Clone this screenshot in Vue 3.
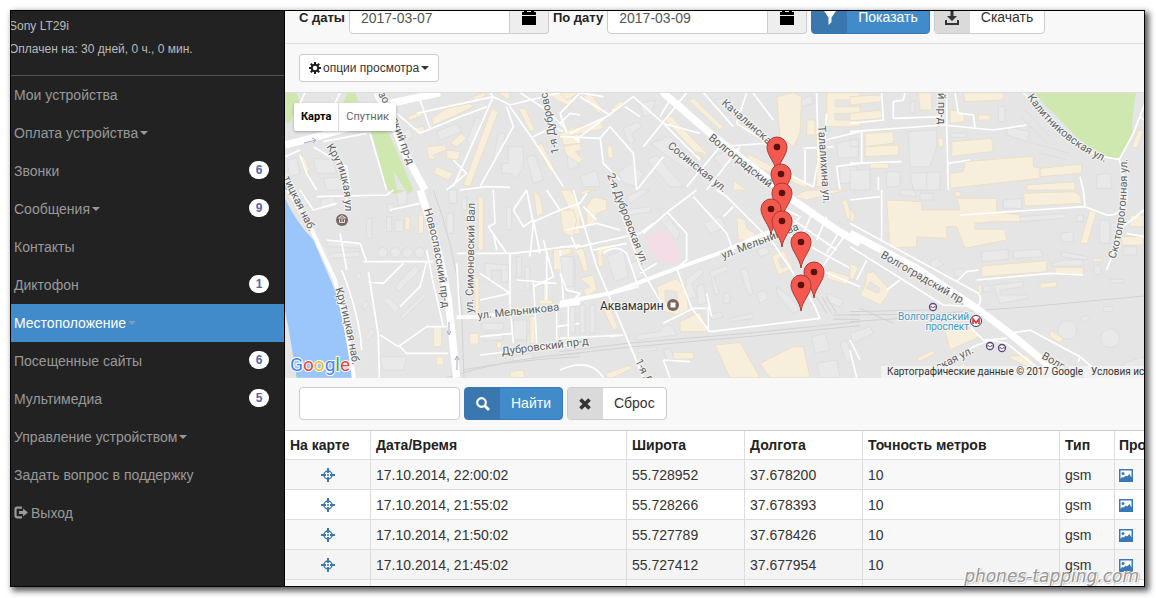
<template>
  <div class="window">
    <aside class="sidebar">
      <div class="device">
        <p>Sony LT29i</p>
        <p>Оплачен на: 30 дней, 0 ч., 0 мин.</p>
      </div>
      <nav>
        <a v-for="item in menu" :key="item.title" href="#" :class="{ active: item.active }">
          <svg v-if="item.exit" class="exit" viewBox="0 0 14 14">
            <path d="M8 1.7H3.2Q1.5 1.7 1.5 3.4V9.6Q1.5 11.3 3.2 11.3H8" fill="none" stroke="currentColor" stroke-width="2.2" />
            <path d="M5 5h4V2.4L14 6.5 9 10.6V8H5z" fill="currentColor" />
          </svg>
          <span>{{item.title}}</span>
          <i v-if="item.drop" class="caret"></i>
          <b v-if="item.count" class="badge">{{item.count}}</b>
        </a>
      </nav>
    </aside>

    <main>
      <form class="dates" @submit.prevent>
        <template v-for="field in dates" :key="field.id">
          <label :for="field.id">{{field.label}}</label>
          <div class="group">
            <input :id="field.id" v-model="field.value" type="text">
            <button type="button" class="addon" aria-label="Календарь">
              <svg viewBox="0 0 16 16" width="16" height="16">
                <path d="M1 2h2V0h3v2h4V0h3v2h2v3H1zM1 6h14v9H1z" />
              </svg>
            </button>
          </div>
        </template>
        <button type="button" class="labeled primary">
          <i><svg viewBox="0 0 14 14" width="14" height="14"><path d="M1 0h12L8.500 6.500V11L5.500 14V6.500z" fill="currentColor" /></svg></i>
          <span>Показать</span>
        </button>
        <button type="button" class="labeled">
          <i><svg viewBox="0 0 14 14" width="14" height="14"><path d="M5.500 0h3v5H12L7 10 2 5h3.500zM0 9h2v3h10V9h2v5H0z" fill="currentColor" /></svg></i>
          <span>Скачать</span>
        </button>
      </form>

      <div class="options">
        <button type="button">
          <svg viewBox="0 0 14 14" width="12" height="12">
            <circle cx="7" cy="7" r="3.800" fill="none" stroke="#222" stroke-width="2.400" />
            <path d="M7 0v3M7 11v3M0 7h3M11 7h3M2 2l2 2M10 10l2 2M12 2l-2 2M4 10l-2 2" stroke="#222" stroke-width="2.400" />
          </svg>
          опции просмотра
          <i class="caret"></i>
        </button>
      </div>

      <section class="map">
        <svg class="canvas" viewBox="285 93 859 285" preserveAspectRatio="xMinYMid slice">
          <defs>
            <path v-for="(d, id) in curves" :id="id" :key="id" :d="d" />
            <g id="pin">
              <path d="M0 26C-1 16-10 9-10 0A10 10 0 0 1 10 0C10 9 1 16 0 26Z" fill="#f5584f" stroke="#a83a35" />
              <circle r="3.300" fill="#5a100d" />
            </g>
          </defs>
          <rect x="285" y="93" width="1200" height="285" fill="#e5e5e5" />
          <g v-for="tile in tiles" :key="tile.at" :transform="`translate(${tile.at}) scale(.33333)`">
            <path :d="tile.green" fill="#cfe8b0" />
            <path :d="tile.water" fill="#9ac6fb" />
            <path :d="tile.pink" fill="#f4dde6" />
            <path :d="tile.grey" fill="#e9e9e9" stroke="#d8dadd" stroke-width="2" />
            <path :d="tile.beige" fill="#f8eedc" stroke="#ebdfc8" stroke-width="3" fill-rule="evenodd" />
            <path :d="tile.rail" class="rail" />
            <path :d="tile.minor" class="road minor" />
            <path :d="tile.mid" class="road mid" />
            <path :d="tile.major" class="road major" />
          </g>

          <g class="labels">
            <text v-for="(l, i) in labels" :key="i" :transform="`translate(${l[1]} ${l[2]}) rotate(${l[3]})`">{{l[0]}}</text>
            <text v-for="(text, id) in curved" :key="id"><textPath :href="'#' + id">{{text}}</textPath></text>
          </g>
          <text x="600" y="310" class="place">Аквамарин</text>
          <circle cx="673" cy="305" r="6" fill="#7b6561" />
          <rect x="671" y="303" width="4" height="4" fill="#fff" stroke="#fff" stroke-width="1" />
          <circle cx="342" cy="220" r="6" fill="#7b6561" />
          <path d="M338.500 218l3.500-2.500 3.500 2.500zM339.500 219.500v3h5v-3M342 219v3" fill="none" stroke="#fff" stroke-width=".8" />
          <g class="metro">
            <text x="969" y="320">Волгоградский</text>
            <text x="969" y="330">проспект</text>
          </g>
          <circle cx="976" cy="321" r="5.500" fill="#fff" stroke="#34386b" />
          <path d="M973 324v-5l3 4 3-4v5" fill="none" stroke="#e0342e" stroke-width="1.600" />
          <g v-for="m in exits" :key="m" :transform="`translate(${m})`">
            <circle r="3.500" fill="#fff" stroke="#4a4d85" stroke-width="1.300" />
            <path d="M-2 1v-2l2 2 2-2v2" fill="none" stroke="#b56" />
          </g>
          <path d="M449 322v12M447 331l2 4 2-4M457 370v-13M455 360l2-4 2 4M304 143l12-3M312 138l4 2-3 3" fill="none" stroke="#a5a9c2" />
          <use v-for="p in pins" :key="p" href="#pin" :transform="`translate(${p})`" />
          <text x="290" y="371" class="google">
            <tspan fill="#4285f4">G</tspan><tspan fill="#ea4335">o</tspan><tspan fill="#fbbc05">o</tspan><tspan fill="#4285f4">g</tspan><tspan fill="#34a853">l</tspan><tspan fill="#ea4335">e</tspan>
          </text>
        </svg>
        <div class="map-type">
          <button type="button" class="on">Карта</button>
          <button type="button">Спутник</button>
        </div>
        <div class="credits">
          <span>Картографические данные © 2017 Google</span>
          <a href="#">Условия использования</a>
        </div>
      </section>

      <form class="search" @submit.prevent>
        <input v-model="query" type="text" aria-label="Поиск">
        <button type="button" class="labeled primary">
          <i><svg viewBox="0 0 14 14" width="14" height="14"><circle cx="5.500" cy="5.500" r="4.300" fill="none" stroke="currentColor" stroke-width="2.200" /><path d="M8.500 8.500l4.500 4.500" stroke="currentColor" stroke-width="2.800" /></svg></i>
          <span>Найти</span>
        </button>
        <button type="button" class="labeled">
          <i><svg viewBox="0 0 14 14" width="14" height="14"><path d="M2.500 2.500l9 9M11.500 2.500l-9 9" stroke="currentColor" stroke-width="3.600" /></svg></i>
          <span>Сброс</span>
        </button>
      </form>

      <table>
        <colgroup>
          <col class="c-map"><col class="c-date"><col class="c-geo"><col class="c-geo"><col><col class="c-type"><col class="c-view">
        </colgroup>
        <thead>
          <tr>
            <th v-for="head in heads" :key="head">{{head}}</th>
          </tr>
        </thead>
        <tbody>
          <tr v-for="row in rows" :key="row[0]">
            <td class="center">
              <a href="#" aria-label="На карте">
                <svg viewBox="0 0 14 14" width="14" height="14" fill="none" stroke="#3a78b5">
                  <circle cx="7" cy="7" r="4" stroke-width="1.400" />
                  <path d="M7 0v5M7 9v5M0 7h5M9 7h5" stroke-width="2" />
                  <path d="M6 7h2" stroke-width="1.500" />
                </svg>
              </a>
            </td>
            <td>{{row[0]}}</td>
            <td>{{row[1]}}</td>
            <td>{{row[2]}}</td>
            <td>10</td>
            <td>gsm</td>
            <td>
              <a href="#" aria-label="Просмотр">
                <svg viewBox="0 0 14 13" width="14" height="13">
                  <path d="M0 0h14v13H0z" fill="#3a78b5" />
                  <path d="M1.500 1.500h11v7L10.500 5 8 7.500 7 6.500 4.500 8.500 3 8 1.500 10z" fill="#fff" />
                  <circle cx="4" cy="4.500" r="1.500" fill="#3a78b5" />
                </svg>
              </a>
            </td>
          </tr>
          <tr class="rest"><td v-for="n in 7" :key="n"></td></tr>
        </tbody>
      </table>
      <div class="watermark">phones-tapping.com</div>
    </main>
  </div>
</template>

<script setup>
  import { ref } from 'vue';

  const query = ref('');
  const dates = ref([
    { id: 'from', label: 'С даты', value: '2017-03-07' },
    { id: 'to', label: 'По дату', value: '2017-03-09' },
  ]);

  const menu = [
    { title: 'Мои устройства' },
    { title: 'Оплата устройства', drop: true },
    { title: 'Звонки', count: 6 },
    { title: 'Сообщения', drop: true, count: 9 },
    { title: 'Контакты' },
    { title: 'Диктофон', count: 1 },
    { title: 'Местоположение', drop: true, active: true },
    { title: 'Посещенные сайты', count: 6 },
    { title: 'Мультимедиа', count: 5 },
    { title: 'Управление устройством', drop: true },
    { title: 'Задать вопрос в поддержку' },
    { title: 'Выход', exit: true },
  ];

  const heads = ['На карте', 'Дата/Время', 'Широта', 'Долгота', 'Точность метров', 'Тип', 'Просмотр'];
  const rows = [
    ['17.10.2014, 22:00:02', '55.728952', '37.678200'],
    ['17.10.2014, 21:55:02', '55.728266', '37.678393'],
    ['17.10.2014, 21:50:02', '55.727789', '37.678426'],
    ['17.10.2014, 21:45:02', '55.727412', '37.677954'],
  ];

  const pins = ['777 147', '781 174', '782 193', '771 209', '782 221', '801 242', '814 272', '801 285'];
  const exits = ['933 307', '990 346', '1002 348'];

  // text, x, y, angle
  const labels = [
    ['зол', 378, 94, 60],
    ['ский пр-д', 391, 119, 70],
    ['тицкая наб.', 283, 178, 64],
    ['ул. Симоновский Вал', 473, 313, -89],
    ['1-я Дубровская', 559, 153, -101],
    ['2-я Дубровская ул.', 607, 175, 69],
    ['Сосинская ул.', 667, 147, 39],
    ['Волгоградский', 708, 139, 39],
    ['Талалихина ул.', 818, 126, 86],
    ['й пр-д', 938, 93, 90],
    ['Волгоградский пр.', 880, 257, 30],
    ['Волгоградский', 1041, 358, 30],
    ['ул. Мельникова', 478, 319, -6],
    ['ул. Мельникова', 723, 259, -21],
    ['Дубровский пр-д', 502, 355, -7],
    ['1-я Дубровская', 635, 361, 64],
    ['ская ул.', 938, 371, -27],
  ];
  const curves = {
    krutUl: 'M326 147Q346 172 345 215',
    krutNab: 'M335 289Q346 320 354 375',
    novo: 'M424 210Q437 250 444 325',
    kach: 'M721 104L764 141Q775 154 776 180',
    kalit: 'M1027 97Q1062 148 1120 168',
    skoto: 'M1115 259Q1129 220 1127 150',
  };
  const curved = {
    krutUl: 'Крутицкая ул',
    krutNab: 'Крутицкая наб.',
    novo: 'Новоспасский пр-д',
    kach: 'Качалинская ул.',
    kalit: 'Калитниковская ул.',
    skoto: 'Скотопрогонная ул.',
  };

  const tiles = [
    {
      at: '280 0',
      green: 'M15 278H48L58 300 50 320 28 372 15 365ZM200 278H225L235 305 190 310ZM270 395L320 388 345 440 400 570H375L345 520ZM275 395L310 392 335 470 350 570H320Z',
      water: 'M12 545L25 570H12Z',
      grey: 'M665 490H685V440H730V500L710 535 690 520H665ZM100 475L160 480 170 520 110 520ZM20 480L50 475 60 520 30 530ZM130 535L190 530 200 570H140ZM640 480L655 400 675 400 670 450ZM470 395L530 370 545 395 480 420ZM350 400L390 385 400 410 365 430ZM740 470L765 465 790 540 760 550ZM860 450L895 440V500L865 510ZM560 420L590 350 605 360 575 440Z',
      beige: 'M550 555L635 325 655 335 570 560ZM455 355L500 325 570 310 580 320 530 345 460 375ZM580 290L610 278 620 285 585 305ZM382 350L425 335 430 345 388 362ZM405 385L430 378 435 395 410 402ZM440 440L495 435 500 450 460 465 465 480 445 475ZM510 430L545 400 560 415 530 440ZM715 325L735 325 765 390 750 395ZM770 435L785 430 825 510 810 515ZM55 470L70 468 90 510 75 518ZM840 400L880 380 900 400V430L850 435ZM470 500L520 520 505 540 460 520ZM655 278H690L685 300ZM800 278H880L870 320 830 300ZM500 450L540 455 535 480 500 475Z',
      minor: 'M60 465L80 520 110 570M130 425L260 400M100 440L200 500 210 570M15 470L60 450M350 340L420 400 540 350 620 320M420 300L450 385M410 340L640 290M640 290L520 560M640 290L690 315 840 278M690 320L760 420 850 560M680 320L700 380 600 560M760 410L820 380 900 420M630 278L640 290M520 480L560 520 500 570M800 330L900 430M840 370L870 340 900 345M540 570L620 560 690 562M720 278L800 330M270 400L320 570M180 278L165 310M75 278L60 310',
      major: 'M15 435L130 405 250 370 335 345M330 310L480 278M335 360L370 450 435 570M290 278L340 370',
    },
    {
      at: '560 0',
      grey: 'M190 385L235 365 245 380 215 400 225 425 205 430ZM175 520L210 490 250 520 230 560 190 550ZM720 300L755 285 760 310 725 320ZM830 430L895 415V470L835 475ZM240 310L285 300 275 345 250 350ZM600 400L620 395 640 420 625 430ZM270 430L330 410 400 490 380 510ZM260 480L290 465 370 560H330ZM460 470L530 440 550 450 490 510ZM460 300L510 290 500 340ZM840 500H890V550H840ZM60 530L110 510 120 560H70Z',
      beige: 'M650 290L700 278 725 290 720 400 700 440 660 410ZM385 300L400 295 490 380 480 390ZM315 345L335 350 440 460 425 475 400 450 320 365ZM740 360H765V405H740ZM800 278H900V380H800ZM825 300V320H900V300ZM825 340V360H900V340ZM150 330L185 300 190 310 160 342ZM70 290L90 280 130 330 115 340ZM0 400L120 360 130 385 0 415ZM10 440L60 430 65 450 45 455 70 480 55 490 20 465ZM560 460L740 550V565L570 490ZM520 540L560 570H520ZM140 440L155 435 160 475 145 475ZM770 410H790V560H770ZM0 278H60L20 300ZM410 455L430 460 425 480 405 475Z',
      minor: 'M60 278L0 340M60 290L150 345 30 400M220 290L60 410M220 290L310 370 420 480M300 350L330 300 300 278M150 380L220 460 230 570M150 380L120 415 0 410M120 410L130 490 180 540M250 440L380 278M430 278L520 380M310 470L230 570M560 278L530 370 640 440M580 280L640 360M540 340L600 390M620 430L480 440 380 560M540 440L440 570M770 278L775 480 760 560 640 500M800 340L795 420 900 395M735 450L735 550 760 560M730 445L820 440M840 570L830 500 900 490M310 370L420 400M60 278L130 290M195 320L240 350M0 340L20 400',
      major: 'M310 278L450 400 640 550 680 570',
    },
    {
      at: '850 0',
      green: 'M550 278H858Q842 370 848 400L810 470Q790 480 770 470 700 440 640 370Z',
      grey: 'M175 395L260 390V440L240 500H180ZM470 380L540 395 530 425 470 405ZM445 320H465V365H445ZM0 510H60V570H0ZM110 515H150V560H110ZM180 520L270 515V570H190ZM550 430L660 460M570 460L650 480M575 300L600 340M740 525L780 520 785 565H740ZM0 420H25V440H0ZM690 490M180 310L195 300V340H180ZM300 400L350 400V412H300ZM230 520V570M525 330L600 410M510 350L590 430',
      beige: 'M0 290L95 285V305L0 315ZM0 340L95 330V355L0 362ZM205 278H245V330H210ZM340 278H460V300L345 305ZM45 400L130 395V430L45 440ZM45 440L145 435V465L45 470ZM305 425L425 415 430 455 375 460 305 470ZM345 485L550 468V500L570 505V535L300 565V520L340 515ZM570 505L695 492V520L570 530ZM530 555L675 545V570H530ZM60 490H115V505H60ZM385 345H420V360H385ZM845 440L865 390 882 392 860 445ZM300 330L340 335 345 365 300 370ZM265 415H280V440H265Z',
      minor: 'M0 395L280 375 430 390 530 375M95 278L100 360 0 370M165 278L160 300 130 305 130 355 280 350M290 278V380L295 570M315 278L325 340 370 345 375 385M35 395V490M0 490L155 485M295 490L360 480M85 530V570M885 310L850 400 808 478 830 570M870 350L882 360M808 478Q700 470 620 380L520 278M690 530L700 570',
    },
    {
      at: '280 190',
      green: 'M325 0H400Q370 30 330 5Z',
      water: 'M12 20Q50 100 100 150L160 290Q185 340 205 480L215 563H50L25 410 12 350Z',
      grey: 'M140 150L240 155V175L145 170ZM150 190L240 185V200L150 205ZM345 290L405 225 420 240 355 305ZM360 380L430 310 440 318 368 388ZM310 330L325 320 360 355 345 370ZM350 10L380 0V40L355 50ZM320 45L340 40V70H325ZM260 85H275V145H260ZM345 90H370V125H345ZM320 80H335V125H320ZM615 220L685 225V275H665V240H635V275H615ZM293 188a15 15 0 1 0 30 0a15 15 0 1 0-30 0ZM331 188a15 15 0 1 0 30 0a15 15 0 1 0-30 0ZM367 188a15 15 0 1 0 30 0a15 15 0 1 0-30 0ZM404 188a15 15 0 1 0 30 0a15 15 0 1 0-30 0ZM500 70H520V130H500ZM505 0H530V40H510ZM545 30L560 20V60H545ZM225 260L240 245 245 260 235 270ZM255 440L275 415 285 425 265 450ZM245 350L260 330 265 345 250 360ZM710 200H725V260H710ZM735 230H750V300H735ZM680 50H695V120H680ZM860 210H885V310H860ZM740 470V430H755V470ZM700 390H740V450H700ZM605 400H670V420H605ZM610 430H670V450H610ZM80 20L90 40 70 50 60 30ZM700 500L760 490V510L700 520ZM120 30L160 20 170 50 130 60ZM300 500L380 500 370 540H310Z',
      beige: 'M595 20H610V180H595ZM375 80H390V120H375ZM415 75H430V130H415ZM585 260H597V370H585ZM460 410H485V470H460ZM568 430H596V462H568ZM820 180L870 175 875 190 840 200 845 240H820ZM790 280H802V330H817V342H777V330H790ZM750 380H765V460H750ZM840 0H870L900 40V130L870 135 860 100 885 90 860 40ZM470 500H490V525H470ZM650 455H665V475H650ZM690 545L730 540 735 563H690ZM760 0L780 20 790 70 770 80Z',
      rail: 'M500 563Q700 500 900 490M460 0Q520 160 545 350L552 563M550 540Q700 510 900 500',
      minor: 'M185 240Q240 380 245 480M265 245L295 435 298 563M265 275L310 280 370 220M300 435L355 470 440 410H500M360 470L380 490H505M250 215H460M440 215L420 290 360 350M140 150L240 160 260 215M110 20L320 15 340 0M330 60L420 40M530 190L700 190 900 165M640 0L645 100 625 110 680 190M700 60L730 110 760 90 780 190M740 0L760 100 750 200M700 60L740 0M690 190V340L700 460M760 270L770 460M830 350V450M600 250L690 310 600 330M800 0L840 60 900 200M840 60L760 95M790 150L820 260 760 290M710 270L830 280M530 220L540 380M830 410L900 400M600 440L700 430M600 495L900 460M440 180L460 280 490 410M60 0L100 60 170 40M200 0V60M180 130L200 240M800 190V330M840 180L850 330M650 180L640 130',
      mid: 'M530 382L600 380 900 338M25 0L100 130 165 270Q200 400 222 563',
      major: 'M420 0Q480 180 505 330L530 563',
    },
    {
      at: '560 190',
      pink: 'M260 140L310 120 345 150 360 190 350 225 285 205Z',
      grey: 'M230 435L300 425Q330 380 350 435L230 450ZM375 270L420 235 430 250 395 280 410 320 380 330ZM410 290L430 280 440 340 415 345ZM490 310H510V340H490ZM540 240L560 235 580 310 565 315ZM590 310L615 300 625 325 600 340ZM755 440L795 430 810 480 765 490ZM450 375L480 365 490 380 455 390ZM510 385L580 370V385L510 395ZM450 245L500 225 505 240 460 260 480 310 465 315ZM650 290L690 320 720 360 700 370 650 310ZM430 100L480 80 500 110 450 130ZM300 90L320 75 360 130 350 150ZM200 60L270 50 275 65 205 75ZM200 20L240 0H270L210 40ZM0 200H40V290H10ZM30 350H45V430H30ZM60 345H75V430H60ZM90 345H105V430H90ZM210 220L230 210 250 260 230 270ZM640 30L670 0 690 20 640 60ZM590 180L620 170 630 190 600 200ZM310 480L330 475 345 510 320 510ZM230 475L290 470V480L235 488ZM140 200L190 180 205 260 165 275ZM770 520L830 510 840 563H780ZM840 460L860 450 880 510 860 520ZM800 310L850 330 840 350 800 335Z',
      beige: 'M290 290L350 265 380 300 385 360 350 375 300 360ZM315 300V335L355 345 350 305ZM360 395L420 365 445 425H360ZM465 465L540 457 600 563H510ZM600 520L700 470H730L750 563H630ZM635 200L670 180 700 235 655 255ZM655 208L670 200 680 228 665 235ZM530 80L555 90 560 115 585 130 580 150 535 150ZM340 487H400V507H340ZM700 20L740 0H860L740 30ZM805 240L870 260 860 285 800 265ZM845 30H860L880 90 860 85ZM60 265L100 255 110 300 80 320 70 300 90 290ZM130 360L150 355 175 415 160 420ZM80 50L100 20 140 30V60L110 70 105 110 80 105ZM0 60L40 60 50 90 40 140 10 130ZM110 170L150 165 155 180 125 190 130 230 115 230ZM40 180L70 175 85 240 70 245 55 195ZM140 550L210 525 215 535 160 563H140ZM730 155L755 150V180L730 190ZM70 0H110L60 15Z',
      rail: 'M0 485L200 460 560 430 900 395M0 495L200 472 560 440 900 407M770 320L800 370M785 320L815 370M800 320L830 370M820 375H900M820 388H900',
      minor: 'M40 0L110 230 220 490 250 563M350 235L395 355 450 425 780 385 760 340 640 160 500 20 470 0M250 130L330 60 410 0M320 65L380 130V210L350 235M0 170L60 170 240 130 280 100M160 0L240 230 310 350M0 250L20 300 60 310 40 330M130 190Q170 160 200 190L235 290 160 310M100 180L200 160M0 60L60 40 80 10M150 440L190 435M0 445L190 435M25 340V440M680 60L720 80 690 120M680 130L880 240M700 90L830 180M860 130L780 240 900 290M760 60L730 130M800 80L770 150M840 120L800 190M310 400L400 355H440M440 310L455 380M445 350V425M310 510L330 563M310 510L390 515M400 20L500 130 520 185M490 80L520 50M0 540Q90 500 130 563M870 450L900 510M20 120L110 100 180 120M240 250L290 220M110 90L70 50',
      mid: 'M0 338L150 310 350 235 490 185 640 120',
      major: 'M650 0L700 30 830 120 900 160',
    },
    {
      at: '850 190',
      grey: 'M460 30L515 25V55H460ZM395 185L475 178V208L395 215ZM490 183L570 178 580 200 490 205ZM635 185L710 200V210L635 200ZM605 220L640 210H700V228H605ZM505 80L650 70 640 85 510 95ZM240 215L260 205 280 225 245 240ZM624 420a28 28 0 1 0 56 0a28 28 0 1 0-56 0ZM752 445a28 28 0 1 0 56 0a28 28 0 1 0-56 0ZM780 268H820V278H780ZM750 90H780V160H750ZM630 130L670 125V155H635ZM820 170H860V195H820ZM430 285L520 275V290L450 300V315H530L535 325 450 340ZM150 0L190 0 200 20 150 15ZM210 10H250V30H210ZM400 290L420 285V305H400ZM0 430L60 410 70 430 10 460ZM690 385L710 375 720 390 700 395ZM820 520L882 500V530L825 535ZM760 350H790V365H760ZM730 230L750 225 755 250 735 255ZM310 240L340 235 345 260 315 260ZM680 75H700V95H680Z',
      beige: 'M110 30L215 35V60H330L320 25H440V65L510 75V95H430L375 100V118H465L470 150 345 175 320 110H290V145L200 140V170L120 175ZM395 228L590 212V245L395 260ZM520 10L670 5Q695 10 695 40L525 48ZM615 232H700V254H615ZM570 280L620 275V290L570 295ZM690 160L720 60 740 65 712 160ZM0 55L15 75 10 95H0ZM50 250L70 245 120 300 110 320 90 345 30 315 45 290ZM60 275L50 295 85 310 90 295ZM0 220L25 230 10 270 0 265ZM285 420L370 415 390 440 300 480ZM815 140H880V165H815ZM840 75H882V110H840ZM200 505L250 480 255 490 210 515ZM470 500L530 495 560 530 550 540ZM385 285H395V310H385ZM730 205H755V215H730ZM315 5H330V20H315ZM600 420L640 445 630 460 600 440ZM270 560L340 520 350 530 300 563Z',
      rail: 'M0 375L240 372 540 350 882 318M0 395L240 380M0 365L240 360M30 355L130 400',
      minor: 'M0 170L280 345 370 350M0 100L385 310Q400 330 380 355M95 0V150M330 75L705 50 770 75Q810 80 830 30M830 0V30M700 0L705 50M770 240L820 110 882 60M480 430L540 420 690 500 685 515M360 410L400 450 470 445M250 563L370 470 420 450 470 460 600 563M150 270L110 300M50 210L20 270M320 275L350 245 385 240M380 270L600 250 700 255M830 130L882 140M0 30L90 20M0 480L20 563M690 500L760 560',
      major: 'M0 130L200 235 380 355 480 430 640 563',
    },
  ];
</script>

<style>
  body {
    margin: 0;
    background: #fff;
  }
</style>
<style scoped>
  .window {
    display: flex;
    box-sizing: border-box;
    height: calc(100vh - 21px);
    margin: 10px 11px 11px 10px;
    overflow: hidden;
    border: 1px solid #000;
    box-shadow: 3px 3px 6px 1px rgba(0, 0, 0, 0.65);
    background: #f8f8f8;
    color: #333;
    font: 14px/20px "Liberation Sans", Arial, sans-serif;
  }

  button,
  input {
    box-sizing: border-box;
    margin: 0;
    font: inherit;
    color: inherit;
  }

  a {
    color: inherit;
    text-decoration: none;
  }

  .sidebar {
    flex: 0 0 273px;
    border-right: 1px solid #000;
    background: #222;
    color: #999;
    overflow: hidden;
  }

  .device {
    height: 60px;
    padding-top: 4px;
    border-bottom: 1px solid #555;
    color: #bbb;
    font-size: 12px;
    line-height: 23px;
    text-indent: -2px;
  }

  .device p {
    margin: 0;
  }

  nav a {
    display: flex;
    align-items: center;
    height: 38px;
    padding: 0 15px 0 3px;
  }

  nav a.active {
    background: #428bca;
    color: #fff;
  }

  .exit {
    width: 14px;
    height: 14px;
    margin-right: 3px;
  }

  .caret {
    display: inline-block;
    margin-left: 2px;
    border: 4px solid transparent;
    border-top-color: currentColor;
    border-bottom: 0;
  }

  .active .caret {
    color: #829cb3;
  }

  .badge {
    min-width: 20px;
    margin-bottom: 2px;
    margin-left: auto;
    border-radius: 9px;
    background: #fff;
    color: #5468a5;
    font-size: 12px;
    line-height: 18px;
    text-align: center;
  }

  main {
    position: relative;
    flex: 1;
    min-width: 0;
    overflow: hidden;
  }

  .dates {
    display: flex;
    align-items: flex-end;
    gap: 4px;
    height: 33px;
    box-sizing: border-box;
    padding: 0 14px 9px;
    border-bottom: 1px solid #ddd;
    overflow: hidden;
  }

  .dates label {
    color: #222;
    font-size: 13px;
    font-weight: bold;
    line-height: 32px;
    white-space: nowrap;
  }

  .group {
    display: flex;
  }

  input {
    width: 161px;
    height: 33px;
    padding: 0 11px;
    border: 1px solid #ccc;
    border-radius: 4px;
    background: #fff;
    color: #555;
  }

  .group input {
    border-radius: 4px 0 0 4px;
  }

  .addon {
    width: 39px;
    padding: 0;
    border: 1px solid #ccc;
    border-left: 0;
    border-radius: 0 4px 4px 0;
    background: #eee;
  }

  .addon svg {
    display: block;
    margin: auto;
  }

  .labeled {
    display: flex;
    height: 33px;
    padding: 0;
    border: 1px solid #ccc;
    border-radius: 4px;
    background: #fff;
    line-height: 31px;
    overflow: hidden;
  }

  .labeled i {
    display: flex;
    align-items: center;
    justify-content: center;
    width: 35px;
    height: 31px;
    background: #dadada;
  }

  .labeled span {
    padding: 0 11px;
  }

  .primary {
    border-color: #3878b3;
    background: #428bca;
    color: #fff;
  }

  .primary i {
    background: #3a77af;
  }

  .options {
    padding: 10px 14px;
    border-bottom: 1px solid #ddd;
  }

  .options button {
    display: flex;
    align-items: center;
    gap: 2px;
    height: 28px;
    padding: 0 9px;
    border: 1px solid #ccc;
    border-radius: 3px;
    background: #fff;
    font-size: 12px;
  }

  .options .caret {
    margin: 0;
  }

  .map {
    position: relative;
    height: 285px;
    font-family: Roboto, sans-serif;
  }

  .canvas {
    display: block;
    width: 100%;
    height: 285px;
  }

  .road {
    fill: none;
    stroke: #fff;
    stroke-linejoin: round;
  }

  .minor {
    stroke-width: 5px;
  }

  .mid {
    stroke-width: 12px;
  }

  .major {
    stroke-width: 22px;
  }

  .rail {
    fill: none;
    stroke: #d2d2d2;
    stroke-width: 3px;
  }

  .labels text,
  .place,
  .metro text {
    fill: #616161;
    stroke: #f4f4f4;
    stroke-width: 2px;
    paint-order: stroke;
    font-size: 11px;
  }

  .place {
    fill: #333;
    font-size: 12px;
  }

  .metro text {
    fill: #3c9bc4;
    font-size: 10px;
    text-anchor: end;
  }

  .google {
    stroke: #fff;
    stroke-width: 2px;
    paint-order: stroke;
    font-size: 19px;
  }

  .map-type {
    position: absolute;
    top: 10px;
    left: 9px;
    display: flex;
    border-radius: 2px;
    background: #fff;
    box-shadow: 0 1px 3px rgba(0, 0, 0, 0.3);
  }

  .map-type button {
    height: 28px;
    padding: 0 7px;
    border: 0;
    background: none;
    color: #666;
    font-size: 11px;
  }

  .map-type .on {
    border-right: 1px solid #ddd;
    color: #000;
    font-weight: bold;
  }

  .credits {
    position: absolute;
    right: 0;
    bottom: 0;
    display: flex;
    gap: 8px;
    box-sizing: border-box;
    width: 263px;
    padding-left: 6px;
    overflow: hidden;
    background: rgba(245, 245, 245, 0.8);
    color: #333;
    font-size: 10px;
    line-height: 12px;
    white-space: nowrap;
  }

  .search {
    display: flex;
    gap: 4px;
    padding: 9px 14px 10px;
  }

  table {
    width: 100%;
    table-layout: fixed;
    border-spacing: 0;
    border-top: 1px solid #ccc;
    background: #fff;
  }

  .c-map {
    width: 86px;
  }

  .c-date {
    width: 256px;
  }

  .c-geo {
    width: 118px;
  }

  .c-type {
    width: 55px;
  }

  .c-view {
    width: 29px;
  }

  th,
  td {
    box-sizing: border-box;
    height: 30px;
    padding: 0 5px;
    border-right: 1px solid #ddd;
    border-bottom: 1px solid #ddd;
    overflow: hidden;
    line-height: 28px;
    text-align: left;
    white-space: nowrap;
  }

  th {
    height: 29px;
    color: #222;
  }

  th:last-child,
  td:last-child {
    padding-right: 0;
    padding-left: 4px;
    border-right: 0;
  }

  tbody tr:nth-child(odd) td {
    background: #f8f8f8;
  }

  tbody tr:nth-child(4) td {
    background: #f4f4f4;
  }

  tbody .rest td {
    background: #fff;
  }

  td.center {
    text-align: center;
  }

  td svg {
    vertical-align: -2px;
  }

  .watermark {
    position: absolute;
    right: 5px;
    bottom: 0;
    color: #999;
    font: italic 17px/20px "DejaVu Sans", sans-serif;
    text-shadow: 1px 1px 0 #fff, -1px -1px 0 #fff, 1px 1px 2px #666;
  }
</style>
